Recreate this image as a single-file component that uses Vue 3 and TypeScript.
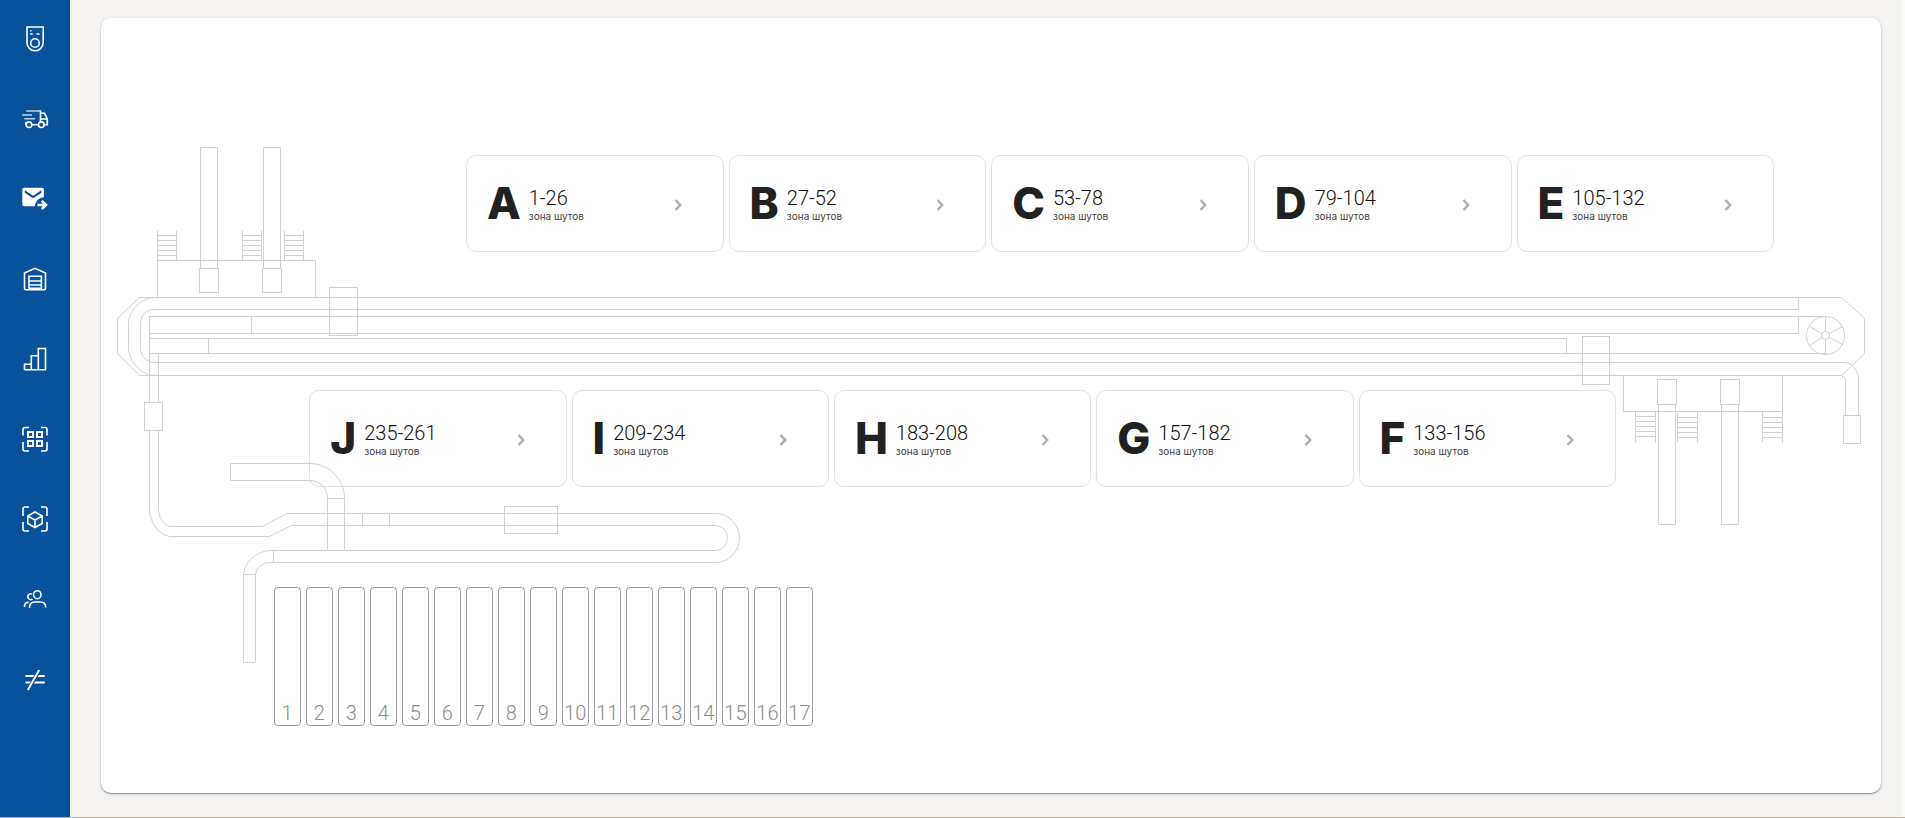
<script setup lang="ts">
interface Zone {
  letter: string
  range: string
}

const navItems: { id: string; label: string }[] = [
  { id: 'badge', label: 'Смена' },
  { id: 'truck', label: 'Доставка' },
  { id: 'mail', label: 'Отправления' },
  { id: 'warehouse', label: 'Склад' },
  { id: 'chart', label: 'Статистика' },
  { id: 'qr', label: 'Сканирование кода' },
  { id: 'cube', label: 'Сканирование груза' },
  { id: 'people', label: 'Сотрудники' },
  { id: 'diff', label: 'Расхождения' },
]

const upperZones: Zone[] = [
  { letter: 'A', range: '1-26' },
  { letter: 'B', range: '27-52' },
  { letter: 'C', range: '53-78' },
  { letter: 'D', range: '79-104' },
  { letter: 'E', range: '105-132' },
]

const lowerZones: Zone[] = [
  { letter: 'J', range: '235-261' },
  { letter: 'I', range: '209-234' },
  { letter: 'H', range: '183-208' },
  { letter: 'G', range: '157-182' },
  { letter: 'F', range: '133-156' },
]

const rows = [
  { id: 'upper', zones: upperZones },
  { id: 'lower', zones: lowerZones },
]

const slots = Array.from({ length: 17 }, (_, i) => i + 1)

const ladder = (x: number, width: number, top: number, bottom: number, firstRung: number): string => {
  const rungs = [0, 1, 2, 3, 4].map((i) => `M${x} ${firstRung + i * 5}h${width}`).join('')
  return `M${x} ${top}V${bottom}M${x + width} ${top}V${bottom}${rungs}`
}

const ladders: string[] = [
  ladder(157, 19, 230, 260, 235),
  ladder(242, 19, 230, 260, 235),
  ladder(284, 19, 230, 260, 235),
  ladder(1635, 20, 411, 442, 416),
  ladder(1677, 20, 411, 442, 417),
  ladder(1762, 20, 411, 442, 417),
]
</script>

<template>
  <div class="app">
    <nav class="sidebar" aria-label="Разделы">
      <a v-for="item in navItems" :key="item.id" class="nav-link" href="#" :aria-label="item.label">
        <svg class="nav-icon" viewBox="0 0 28 28" aria-hidden="true">
          <g v-if="item.id === 'badge'">
            <path d="M6 2h16.200v15.500a8.100 8.300 0 0 1-16.200 0z" />
            <circle cx="14" cy="18" r="4.300" />
            <path d="M9.300 9h2.500M15.500 9h3M9.200 5.700h1.400" />
          </g>
          <g v-else-if="item.id === 'truck'">
            <path class="soft" d="M5.300 6h14M1.300 10H11M3.300 13.800H14" />
            <path d="M19.500 5.300V17M20 8.300h3.500l2.800 5.700v5.700h-2.500M20 14h6.300M11 19.700h6.300M5 19.700V17" />
            <circle cx="8" cy="19.700" r="2.800" />
            <circle cx="20.300" cy="19.700" r="2.800" />
          </g>
          <g v-else-if="item.id === 'mail'">
            <path
              class="solid"
              d="M3.400 2.700H20.800A2 2 0 0 1 22.900 4.800V12.300A9 9 0 0 0 13.900 21.300H3.400A2 2 0 0 1 1.300 19.200V4.800A2 2 0 0 1 3.400 2.700ZM3.800 5.300V7.700L12.100 13.200 20.400 7.700V5.300L12.100 10.700Z"
            />
            <path class="heavy" d="M16.500 20h8M20.800 15.800l4.200 4.200-4.200 4.200" />
          </g>
          <g v-else-if="item.id === 'warehouse'">
            <path d="M3.500 8 14 3.300 24.500 8v15.300a1.400 1.400 0 0 1-1.400 1.400H4.900a1.400 1.400 0 0 1-1.400-1.400z" />
            <path d="M8 24.700V11.300h12.400v13.400M8 16h12.400M8 20h12.400M8 23.300h12.400" />
          </g>
          <g v-else-if="item.id === 'chart'">
            <path d="M3.500 24.700v-5.500h6.800v5.500M10.300 24.700V10.700h7v14M17.300 24.700V3.500h7.200v21.200zM3.500 24.700h20" />
          </g>
          <g v-else-if="item.id === 'qr'">
            <path d="M2 10.500V4.500a2 2 0 0 1 2-2h4M20 2.500h4a2 2 0 0 1 2 2v6M26 17v7a2 2 0 0 1-2 2h-4M8 26H4a2 2 0 0 1-2-2v-7" />
            <path class="bold" d="M7 7h5v5H7zM16 7h5v5h-5zM7 16h5v5H7zM16 16h5v5h-5z" />
          </g>
          <g v-else-if="item.id === 'cube'">
            <path d="M2 11V4a2 2 0 0 1 2-2h4M20 2h4a2 2 0 0 1 2 2v7M26 17v7a2 2 0 0 1-2 2h-4M8 26H4a2 2 0 0 1-2-2v-7" />
            <path d="M14 7l7.200 4v7.500L14 22.500l-7.200-4V11zM6.800 11l7.200 4 7.200-4M14 15v7.500" />
          </g>
          <g v-else-if="item.id === 'people'">
            <ellipse cx="16.300" cy="9.700" rx="3.700" ry="4" />
            <path d="M11 9.100a2.900 2.900 0 1 0 .4 5M3.500 22v-.600c0-2.400 1.600-4 4-4M8.500 22.700c0-3.500 1.800-5.700 5-5.700h6c3.200 0 5.200 2.200 5.200 5.500" />
          </g>
          <g v-else>
            <path class="bold" d="M4.500 11h19.300M4.500 17.600h19.300" />
            <path class="gap" d="M19 4 7 25" />
            <path class="bold" d="M18.200 5 6.800 25" />
          </g>
        </svg>
      </a>
    </nav>

    <main class="content">
      <section class="board" aria-label="Схема сортировки">
        <div v-for="row in rows" :key="row.id" class="zone-row" :class="row.id">
          <button v-for="zone in row.zones" :key="zone.letter" type="button" class="zone">
            <span class="letter">{{ zone.letter }}</span>
            <span class="info">
              <span class="range">{{ zone.range }}</span>
              <span class="caption">зона шутов</span>
            </span>
            <svg class="arrow" viewBox="0 0 8 14" aria-hidden="true">
              <path d="M1.500 2l4.700 5-4.700 5" />
            </svg>
          </button>
        </div>

        <div class="slots">
          <button v-for="slot in slots" :key="slot" type="button" class="slot">{{ slot }}</button>
        </div>

        <svg class="scheme" viewBox="101 18 1780 775" preserveAspectRatio="none" aria-hidden="true">
          <g transform="translate(.5 .5)">
            <!-- sorter frame -->
            <path d="M139 297H1841L1864 318V353L1841 375H139L117 353V318Z" />
            <path d="M153 297C140 298 128 311 128 323V348C129 362 141 374 153 375" />
            <path d="M1798 297V309H154C145 309 140 315 140 324V348C140 357 147 362 156 362H1844C1852 362 1858 371 1858 379V415" />
            <path d="M1841 375Q1845 376 1845 380V415" />
            <path d="M1825 316H149V402M149 333H1798V316" />
            <path d="M149 338H1566V353M149 353H1825M251 316V333M208 338V353M158 353V402" />
            <rect x="329" y="287" width="28" height="48" />
            <rect x="1582" y="336" width="27" height="48" />

            <!-- drive wheel -->
            <circle cx="1825" cy="335" r="19" />
            <circle cx="1825" cy="335" r="4" />
            <path d="M1825 331V316M1825 339V354M1828.500 333L1842 326M1828.500 337L1842 344M1821.500 333L1809 326M1821.500 337L1809 345" />

            <!-- infeed stations -->
            <path d="M157 297V260H315V297" />
            <path d="M1623 375V411H1782V375" />
            <path d="M200 268V147H217V268M263 268V147H280V268" />
            <path d="M1658 404V524H1675V404M1721 404V524H1738V404" />
            <rect x="199" y="268" width="19" height="24" />
            <rect x="262" y="268" width="19" height="24" />
            <rect x="1657" y="379" width="19" height="25" />
            <rect x="1720" y="379" width="19" height="25" />
            <rect x="1843" y="415" width="17" height="28" />
            <path v-for="d in ladders" :key="d" :d="d" />

            <!-- lower loop -->
            <rect x="144" y="402" width="18" height="28" />
            <path d="M149 430V508C149 523 160 536 171 536H269L291 525H715A12 12.500 0 0 1 715 550H271C256 550 243 562 243 576V662H255V574C256 567 262 562 270 562H715A24 24.500 0 0 0 715 513H286L262 526H171C163 525 158 517 158 508V430" />
            <path d="M273 550V562M243 574H255M362 513V525M389 513V525" />
            <path d="M344 550V498C344 478 328 463 309 463H230V480H309C320 480 327 488 327 498V550M327 498H344" />
            <rect x="504" y="506" width="53" height="27" />
          </g>
        </svg>
      </section>
    </main>
  </div>
</template>

<style>
body {
  margin: 0;
  background: #f5f4f3;
}
</style>

<style scoped>
.app {
  box-sizing: border-box;
  display: flex;
  min-height: 100vh;
  border-bottom: 1px solid #b9b3a8;
  font-family: Roboto, "Noto Sans", sans-serif;
  color: #212121;
}

.sidebar {
  flex: none;
  display: flex;
  flex-direction: column;
  align-items: center;
  gap: 52px;
  width: 70px;
  padding: 25px 0;
  box-sizing: border-box;
  background: #07529b;
}

.nav-link,
.nav-icon {
  display: block;
  width: 28px;
  height: 28px;
}

.nav-icon {
  fill: none;
  stroke: #fff;
  stroke-width: 1.6px;
}

.nav-icon .soft {
  opacity: 0.75;
}

.nav-icon .solid {
  fill: #fff;
  stroke: none;
}

.nav-icon .bold {
  stroke-width: 2px;
}

.nav-icon .heavy {
  stroke-width: 2.6px;
}

.nav-icon .gap {
  stroke: #07529b;
  stroke-width: 4px;
}

.content {
  flex: 1;
  min-width: 0;
  display: flex;
  padding: 18px 20px 24px 31px;
  border-right: 4px solid #fbfbfa;
}

.board {
  position: relative;
  flex: 1;
  min-width: 0;
  box-sizing: border-box;
  padding: 137px 0 67px;
  border-radius: 10px;
  background: #fff;
  box-shadow: 0 1px 1px rgba(0, 0, 0, 0.35), 0 1px 4px rgba(0, 0, 0, 0.14);
}

.scheme {
  position: absolute;
  inset: 0;
  width: 100%;
  height: 100%;
  fill: none;
  stroke: #d2d2d2;
  stroke-width: 1px;
  pointer-events: none;
}

.zone-row {
  display: flex;
  gap: 5px;
}

.upper {
  padding: 0 6% 0 20.5%;
}

.lower {
  margin-top: 138px;
  padding: 0 14.9% 0 11.7%;
}

.zone {
  flex: 1;
  min-width: 0;
  box-sizing: border-box;
  display: flex;
  align-items: center;
  gap: 8px;
  height: 97px;
  padding: 0 41px 2px 20px;
  border: 1px solid #e2e2e2;
  border-radius: 10px;
  background: #fff;
  color: #212121;
  font-family: inherit;
  text-align: left;
  cursor: pointer;
}

.letter {
  font-family: Inter, sans-serif;
  font-size: 44px;
  line-height: 48px;
  font-weight: 800;
}

.info {
  display: flex;
  flex-direction: column;
  padding-top: 4px;
}

.range {
  font-size: 20px;
  line-height: 22px;
  font-weight: 300;
  color: #111;
  white-space: nowrap;
}

.caption {
  font-family: Inter, sans-serif;
  font-size: 10px;
  line-height: 14px;
  color: #424242;
  white-space: nowrap;
}

.arrow {
  flex: none;
  width: 8px;
  height: 14px;
  margin-top: 4px;
  margin-left: auto;
  fill: none;
  stroke: #b0b0b0;
  stroke-width: 2.5px;
}

.slots {
  display: flex;
  gap: 5px;
  margin-top: 100px;
  padding: 0 60% 0 9.7%;
}

.slot {
  flex: 1;
  min-width: 0;
  box-sizing: border-box;
  display: flex;
  align-items: flex-end;
  justify-content: center;
  height: 139px;
  padding: 0;
  border: 1px solid #a0a0a0;
  border-radius: 4px;
  background: #fff;
  color: #8c8c8c;
  font-family: inherit;
  font-size: 20px;
  line-height: 24px;
  font-weight: 300;
  cursor: pointer;
}
</style>
